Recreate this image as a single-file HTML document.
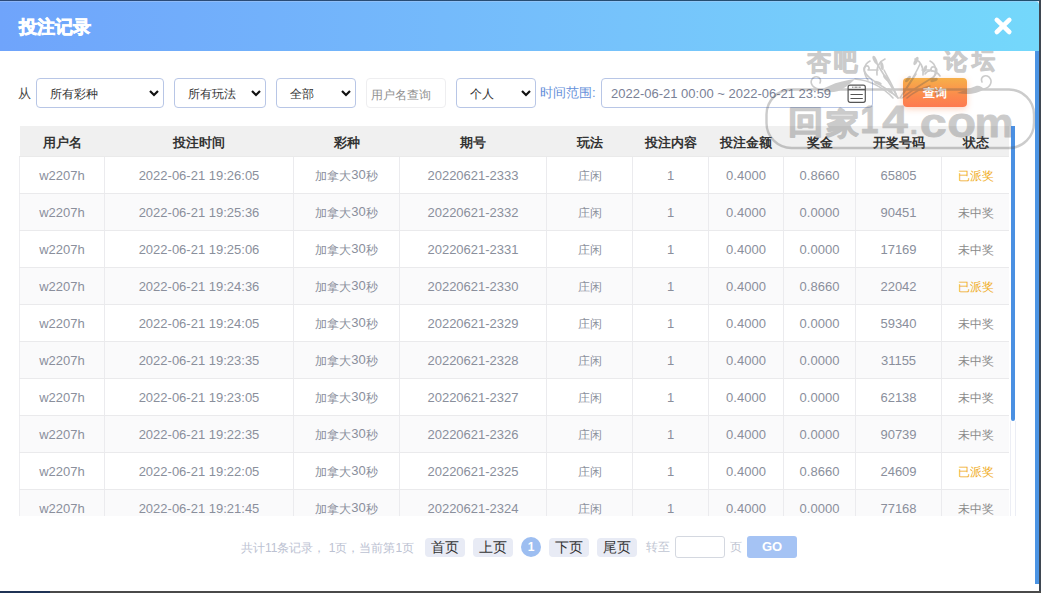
<!DOCTYPE html>
<html><head><meta charset="utf-8">
<style>
*{box-sizing:border-box;margin:0;padding:0}
html,body{width:1041px;height:593px;overflow:hidden;background:#fff;font-family:"Liberation Sans",sans-serif;position:relative}
.abs{position:absolute}
#topline{left:0;top:0;width:1039px;height:1px;background:linear-gradient(90deg,#2c4a7a,#21506e);box-shadow:0 1px 0 rgba(180,205,245,.45)}
#rightline{left:1039px;top:0;width:2px;height:593px;background:#3f4752}
#botline{left:0;top:591px;width:1041px;height:2px;background:#4a4a4a}
#botline2{left:0;top:591px;width:50px;height:2px;background:#1f3355}
#header{left:0;top:1px;width:1039px;height:50px;background:linear-gradient(90deg,#6fa4fb 0%,#76c3fb 60%,#74d8fb 100%);border-top-right-radius:4px}
#title{left:19px;top:16px;font-size:18px;font-weight:bold;color:#fff;-webkit-text-stroke:0.7px #fff;line-height:22px;letter-spacing:0px}
#close{left:993px;top:16px;width:20px;height:20px}
#outscroll{left:1035px;top:51px;width:4px;height:533px;background:#4b94e4}
.lbl{font-size:13px;color:#444;line-height:16px}
.sel{height:30px;top:78px;border:1px solid #b8c6e6;border-radius:4px;background:#fff;font-size:12px;color:#333;line-height:28px;padding-left:13px;padding-top:1px}
.chev{position:absolute;top:11px;width:10px;height:7px}
.inp{top:78px;height:30px;border:1px solid #eeeef0;border-radius:4px;background:#fff;font-size:12px;color:#909090;line-height:28px;padding-left:4px;padding-top:2px}
#btnq{left:903px;top:78px;width:64px;height:29px;border-radius:4px;background:linear-gradient(180deg,#f6b04a 0%,#fc8a4c 60%,#fd7a50 100%);box-shadow:0 2px 6px rgba(252,130,70,.35);color:#fff;font-size:12px;font-weight:bold;text-align:center;line-height:31px}
#table{left:19px;top:126px;width:990px;height:390px;overflow:hidden}
table{border-collapse:collapse;table-layout:fixed;width:990px}
th{height:30px;padding-top:5px;background:#f0f0f0;font-size:13px;font-weight:bold;color:#333;text-align:center;border-bottom:1px solid #eaeaea}
td{height:37px;padding-top:1px;font-size:13px;color:#8a8f9c;text-align:center;border-bottom:1px solid #eaeaec;border-left:1px solid #ebebee}
td:first-child{border-left:1px solid #ededf0}
tr:nth-child(odd) td{background:#fafafb}
td i{font-style:normal;font-size:12px;position:relative;top:1px}
.win{color:#f0ad26}
.lose{color:#8a8a8a}
#scroll{left:1011px;top:126px;width:4px;height:295px;background:#4a90e2;border-radius:0 0 2px 2px}
#pg{top:536px;left:0;width:1041px;height:22px}
.pinfo{left:241px;top:541px;font-size:12px;color:#bcc2d2;line-height:14px}
.pbtn{top:538px;height:19px;width:40px;background:#e8ebf5;border-radius:4px;font-size:14px;color:#333;text-align:center;line-height:19px}
#pcur{left:521px;top:537px;width:20px;height:20px;border-radius:50%;background:#9dbef1;color:#fff;font-size:12px;font-weight:bold;text-align:center;line-height:20px}
#wm{left:0;top:0;width:1041px;height:593px;pointer-events:none}
</style></head><body>
<div class="abs" id="header"></div>
<div class="abs" id="topline"></div>
<div class="abs" id="title">投注记录</div>
<svg class="abs" id="close" viewBox="0 0 20 20"><path d="M3.8 3.9L16.3 16M16.3 3.9L3.8 16" stroke="#fff" stroke-width="4.6" stroke-linecap="round"/></svg>

<div class="abs lbl" style="left:18px;top:86px">从</div>
<div class="abs sel" style="left:36px;width:128px">所有彩种<svg class="chev" style="left:112px" viewBox="0 0 10 7"><path d="M1 1L5 5L9 1" stroke="#111" stroke-width="2.2" fill="none"/></svg></div>
<div class="abs sel" style="left:174px;width:92px">所有玩法<svg class="chev" style="left:76px" viewBox="0 0 10 7"><path d="M1 1L5 5L9 1" stroke="#111" stroke-width="2.2" fill="none"/></svg></div>
<div class="abs sel" style="left:276px;width:80px">全部<svg class="chev" style="left:64px" viewBox="0 0 10 7"><path d="M1 1L5 5L9 1" stroke="#111" stroke-width="2.2" fill="none"/></svg></div>
<div class="abs inp" style="left:366px;width:80px">用户名查询</div>
<div class="abs sel" style="left:456px;width:80px">个人<svg class="chev" style="left:64px" viewBox="0 0 10 7"><path d="M1 1L5 5L9 1" stroke="#111" stroke-width="2.2" fill="none"/></svg></div>
<div class="abs lbl" style="left:540px;top:85px;color:#6690da">时间范围:</div>
<div class="abs sel" style="left:601px;width:272px;color:#7a8196;padding-left:9px;font-size:13px">2022-06-21 00:00 ~ 2022-06-21 23:59
<svg class="abs" style="left:245px;top:5px" width="20" height="20" viewBox="0 0 20 20"><rect x="1.1" y="1.1" width="17.2" height="17.2" rx="2" stroke="#555" stroke-width="1.2" fill="none"/><path d="M1.1 5.6H18.3M3.5 10.5H15.8M3.5 14.5H15.8" stroke="#555" stroke-width="1.2"/><path d="M5 3.2H6.5M7.5 3.2H10.5M11.5 3.2H13.8" stroke="#777" stroke-width="1"/></svg></div>
<div class="abs" id="btnq">查询</div>

<div class="abs" id="table">
<table>
<colgroup><col style="width:85px"><col style="width:189px"><col style="width:106px"><col style="width:147px"><col style="width:86px"><col style="width:76px"><col style="width:75px"><col style="width:72px"><col style="width:86px"><col style="width:68px"></colgroup>
<tr><th>用户名</th><th>投注时间</th><th>彩种</th><th>期号</th><th>玩法</th><th>投注内容</th><th>投注金额</th><th>奖金</th><th>开奖号码</th><th>状态</th></tr>
<tr><td>w2207h</td><td>2022-06-21 19:26:05</td><td><i>加拿大</i>30<i>秒</i></td><td>20220621-2333</td><td><i>庄闲</i></td><td>1</td><td>0.4000</td><td>0.8660</td><td>65805</td><td class="win"><i>已派奖</i></td></tr>
<tr><td>w2207h</td><td>2022-06-21 19:25:36</td><td><i>加拿大</i>30<i>秒</i></td><td>20220621-2332</td><td><i>庄闲</i></td><td>1</td><td>0.4000</td><td>0.0000</td><td>90451</td><td class="lose"><i>未中奖</i></td></tr>
<tr><td>w2207h</td><td>2022-06-21 19:25:06</td><td><i>加拿大</i>30<i>秒</i></td><td>20220621-2331</td><td><i>庄闲</i></td><td>1</td><td>0.4000</td><td>0.0000</td><td>17169</td><td class="lose"><i>未中奖</i></td></tr>
<tr><td>w2207h</td><td>2022-06-21 19:24:36</td><td><i>加拿大</i>30<i>秒</i></td><td>20220621-2330</td><td><i>庄闲</i></td><td>1</td><td>0.4000</td><td>0.8660</td><td>22042</td><td class="win"><i>已派奖</i></td></tr>
<tr><td>w2207h</td><td>2022-06-21 19:24:05</td><td><i>加拿大</i>30<i>秒</i></td><td>20220621-2329</td><td><i>庄闲</i></td><td>1</td><td>0.4000</td><td>0.0000</td><td>59340</td><td class="lose"><i>未中奖</i></td></tr>
<tr><td>w2207h</td><td>2022-06-21 19:23:35</td><td><i>加拿大</i>30<i>秒</i></td><td>20220621-2328</td><td><i>庄闲</i></td><td>1</td><td>0.4000</td><td>0.0000</td><td>31155</td><td class="lose"><i>未中奖</i></td></tr>
<tr><td>w2207h</td><td>2022-06-21 19:23:05</td><td><i>加拿大</i>30<i>秒</i></td><td>20220621-2327</td><td><i>庄闲</i></td><td>1</td><td>0.4000</td><td>0.0000</td><td>62138</td><td class="lose"><i>未中奖</i></td></tr>
<tr><td>w2207h</td><td>2022-06-21 19:22:35</td><td><i>加拿大</i>30<i>秒</i></td><td>20220621-2326</td><td><i>庄闲</i></td><td>1</td><td>0.4000</td><td>0.0000</td><td>90739</td><td class="lose"><i>未中奖</i></td></tr>
<tr><td>w2207h</td><td>2022-06-21 19:22:05</td><td><i>加拿大</i>30<i>秒</i></td><td>20220621-2325</td><td><i>庄闲</i></td><td>1</td><td>0.4000</td><td>0.8660</td><td>24609</td><td class="win"><i>已派奖</i></td></tr>
<tr><td>w2207h</td><td>2022-06-21 19:21:45</td><td><i>加拿大</i>30<i>秒</i></td><td>20220621-2324</td><td><i>庄闲</i></td><td>1</td><td>0.4000</td><td>0.0000</td><td>77168</td><td class="lose"><i>未中奖</i></td></tr>
</table>
</div>
<div class="abs" style="left:1010px;top:421px;width:6px;height:95px;border-left:1px solid #eceef5;border-right:1px solid #eceef5"></div>
<div class="abs" id="scroll"></div>

<div class="abs pinfo">共计11条记录， 1页，当前第1页</div>
<div class="abs pbtn" style="left:425px">首页</div>
<div class="abs pbtn" style="left:473px">上页</div>
<div class="abs" id="pcur">1</div>
<div class="abs pbtn" style="left:549px">下页</div>
<div class="abs pbtn" style="left:597px">尾页</div>
<div class="abs pinfo" style="left:646px;top:540px;color:#c0c5d2">转至</div>
<div class="abs" style="left:675px;top:536px;width:50px;height:22px;border:1px solid #d4d8e0;border-radius:3px;background:#fff"></div>
<div class="abs pinfo" style="left:730px;top:540px;color:#c0c5d2">页</div>
<div class="abs" style="left:747px;top:536px;width:50px;height:22px;background:#a5c3f4;border-radius:3px;color:#fff;font-size:13px;font-weight:bold;text-align:center;line-height:22px">GO</div>

<svg class="abs" id="wm" width="1041" height="593" viewBox="0 0 1041 593">
<defs><clipPath id="wc"><rect x="0" y="51" width="1041" height="542"/></clipPath></defs>
<g opacity="0.3" fill="#555" stroke="#555" clip-path="url(#wc)">
<rect x="766.5" y="89.5" width="267.5" height="58.5" rx="25" fill="none" stroke-width="2.4"/>
<g font-family="Liberation Sans, sans-serif" font-weight="bold" font-size="100" stroke-linejoin="round">
<text transform="matrix(0.3540 0 0 0.3175 787.93 133.42)" stroke-width="4.5">回</text>
<text transform="matrix(0.3330 0 0 0.3009 826.03 133.58)" stroke-width="4.5">家</text>
<text transform="matrix(0.2373 0 0 0.2373 807.17 69.57)" stroke-width="4.5">杏</text>
<text transform="matrix(0.2333 0 0 0.2479 833.77 70.13)" stroke-width="4.5">吧</text>
<text transform="matrix(0.2337 0 0 0.2475 944.40 69.04)" stroke-width="4.5">论</text>
<text transform="matrix(0.2305 0 0 0.2402 972.45 68.18)" stroke-width="4.5">坛</text>
<text transform="matrix(0.3286 0 0 0.3845 860.26 133.42)" stroke-width="2">1</text>
<text transform="matrix(0.4600 0 0 0.3845 882.24 133.42)" stroke-width="2">4</text>
<text transform="matrix(0.2937 0 0 0.2647 909.84 134.24)" stroke-width="2">.</text>
<text transform="matrix(0.4863 0 0 0.4158 919.64 137.17)" stroke-width="2">c</text>
<text transform="matrix(0.4709 0 0 0.4158 947.19 137.17)" stroke-width="2">o</text>
<text transform="matrix(0.4397 0 0 0.4143 974.46 137.09)" stroke-width="2">m</text>
</g>
<path stroke="none" d="M819 89 C826 94 837 93 844 88 C849 85 852 82 855 79 C847 80 837 82 829 86 C825 88 822 89 819 89 Z"/>
<path stroke="none" d="M984 89 C978 94 967 95 957 93 C963 91 970 88 976 86 C979 85 982 87 984 89 Z"/>
<g fill="none" stroke-width="1.6" stroke-linecap="round">
<path d="M819 89 C812 88 809 82 813 78 C817 75 822 78 820 83"/>
<path d="M984 89 C991 87 993 81 989 77 C985 74 980 77 982 82"/>
<path d="M855 79 C870 80 884 88 893 98"/>
<path d="M940 76 C936 70 928 69 925 74 M930 86 C922 88 914 92 907 98"/>
<path d="M868 80 C862 72 864 64 870 61 M877 75 C876 67 880 61 885 59 M869 70 L878 70"/>
<path d="M932 80 C938 72 936 64 930 61 M923 75 C924 67 920 61 915 59 M931 70 L922 70"/>
<path d="M898 98 C890 90 880 86 870 78 C864 73 862 68 866 66 C869 65 870 69 868 70"/>
<path d="M898 98 C892 86 884 76 876 62"/>
<path d="M896 94 C892 84 888 78 884 70"/>
<path d="M900 98 C906 88 914 78 920 64"/>
<path d="M902 98 C912 90 922 84 932 78 C938 74 938 68 934 67 C931 66 930 70 932 71"/>
<path d="M903 94 C908 86 912 80 916 74"/>
</g>
<g stroke="none">
<ellipse cx="875" cy="60" rx="1.8" ry="4.5" transform="rotate(-25 875 60)"/>
<ellipse cx="882" cy="66" rx="1.6" ry="4" transform="rotate(-10 882 66)"/>
<ellipse cx="886" cy="78" rx="1.6" ry="4" transform="rotate(-40 886 78)"/>
<ellipse cx="878" cy="83" rx="1.6" ry="4" transform="rotate(-70 878 83)"/>
<ellipse cx="890" cy="91" rx="1.5" ry="3.5" transform="rotate(-50 890 91)"/>
<ellipse cx="916" cy="61" rx="1.8" ry="4.5" transform="rotate(25 916 61)"/>
<ellipse cx="925" cy="69" rx="1.6" ry="4" transform="rotate(20 925 69)"/>
<ellipse cx="908" cy="79" rx="1.6" ry="4" transform="rotate(40 908 79)"/>
<ellipse cx="934" cy="80" rx="1.6" ry="4" transform="rotate(70 934 80)"/>
<ellipse cx="938" cy="93" rx="1.5" ry="3.5" transform="rotate(60 938 93)"/>
</g>
</g>
</svg>
<div class="abs" id="outscroll"></div>
<div class="abs" id="rightline"></div>
<div class="abs" id="botline"></div>
<div class="abs" id="botline2"></div>
</body></html>
